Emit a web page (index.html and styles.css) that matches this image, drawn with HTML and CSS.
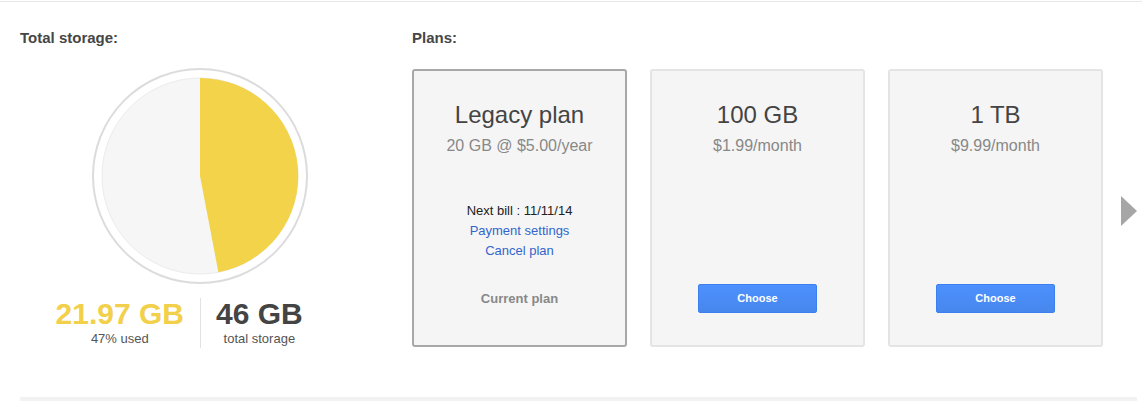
FILE: index.html
```html
<!DOCTYPE html>
<html lang="en">
<head>
<meta charset="utf-8">
<title>Storage</title>
<link rel="stylesheet" href="styles.css">
</head>
<body>
<div class="topline"></div>
<div class="content">
  <section class="storage">
    <h2 class="heading">Total storage:</h2>
    <div class="pie-wrap">
      <svg class="pie" width="218" height="218" viewBox="-109 -109 218 218">
        <circle cx="0" cy="0" r="107" fill="#fff" stroke="#dcdcdc" stroke-width="2"/>
        <circle cx="0" cy="0" r="98" fill="#f6f6f6" stroke="#ebebeb" stroke-width="1"/>
        <path d="M0,-98 A98,98 0 0,1 18.4,96.3 L0,0 Z" fill="#f2d349"/>
      </svg>
    </div>
    <div class="stats">
      <div class="half half-left">
        <div class="stat">
          <div class="stat-num used">21.97 GB</div>
          <div class="stat-label">47% used</div>
        </div>
      </div>
      <div class="half half-right">
        <div class="stat">
          <div class="stat-num total">46 GB</div>
          <div class="stat-label">total storage</div>
        </div>
      </div>
    </div>
  </section>
  <section class="plans">
    <h2 class="heading">Plans:</h2>
    <div class="plan-row">
      <div class="card current">
        <div class="card-title">Legacy plan</div>
        <div class="card-price">20 GB @ $5.00/year</div>
        <div class="details">
          <div class="bill">Next bill : 11/11/14</div>
          <a class="link" href="#">Payment settings</a>
          <a class="link" href="#">Cancel plan</a>
        </div>
        <div class="foot"><span class="current-label">Current plan</span></div>
      </div>
      <div class="card">
        <div class="card-title">100 GB</div>
        <div class="card-price">$1.99/month</div>
        <div class="foot"><button class="choose">Choose</button></div>
      </div>
      <div class="card">
        <div class="card-title">1 TB</div>
        <div class="card-price">$9.99/month</div>
        <div class="foot"><button class="choose">Choose</button></div>
      </div>
      <div class="next-arrow"></div>
    </div>
  </section>
</div>
<div class="bottom-strip"></div>
</body>
</html>
```
FILE: styles.css
```css
html, body {
  margin: 0;
  padding: 0;
  background: #fff;
  font-family: "Liberation Sans", Arial, sans-serif;
  overflow: hidden;
}

.topline {
  margin-top: 1px;
  height: 1px;
  background: #e8e8e8;
}

.content {
  display: flex;
  padding: 27px 5px 0 20px;
}

.heading {
  margin: 0;
  font-size: 15px;
  line-height: 18px;
  font-weight: bold;
  color: #464646;
}

.storage {
  width: 360px;
  margin-right: 32px;
  flex: none;
}

.pie-wrap {
  display: flex;
  justify-content: center;
  margin-top: 20px;
}

.pie {
  display: block;
}

.stats {
  display: flex;
  margin-top: 13px;
}

.half {
  width: 180px;
  display: flex;
}

.half-left {
  justify-content: flex-end;
  padding-right: 16px;
  box-sizing: border-box;
}

.half-right {
  justify-content: flex-start;
  padding-left: 15px;
  border-left: 1px solid #e2e2e2;
  box-sizing: border-box;
  padding-bottom: 1px;
}

.stat {
  text-align: center;
}

.stat-num {
  font-size: 30px;
  line-height: 32px;
  font-weight: bold;
}

.stat-num.used {
  color: #f2d04b;
}

.stat-num.total {
  color: #444;
}

.stat-label {
  margin-top: 1px;
  font-size: 13px;
  line-height: 16px;
  color: #555;
}

.plans {
  flex: 1;
}

.plan-row {
  display: flex;
  gap: 23px;
  margin-top: 22px;
}

.card {
  width: 215px;
  height: 278px;
  box-sizing: border-box;
  border: 2px solid #e4e4e4;
  border-radius: 3px;
  background: #f5f5f5;
  display: flex;
  flex-direction: column;
  align-items: center;
  padding: 30px 0 31px;
  text-align: center;
}

.card.current {
  border-color: #a8a8a8;
}

.card-title {
  font-size: 24px;
  line-height: 28px;
  color: #444;
}

.card-price {
  margin-top: 7px;
  font-size: 16px;
  line-height: 20px;
  color: #888;
}

.details {
  margin-top: 45px;
  display: flex;
  flex-direction: column;
  align-items: center;
  font-size: 13px;
  line-height: 20px;
}

.bill {
  color: #222;
}

.link {
  color: #3366cc;
  text-decoration: none;
}

.foot {
  margin-top: auto;
  height: 30px;
  display: flex;
  align-items: flex-start;
  justify-content: center;
}

.current-label {
  font-size: 13px;
  line-height: 30px;
  font-weight: bold;
  color: #888;
}

.choose {
  width: 119px;
  height: 29px;
  box-sizing: border-box;
  margin: 0;
  padding: 0 0 1px;
  border: 1px solid #3b80ee;
  border-radius: 2px;
  background: linear-gradient(#4d90fe, #4787ed);
  color: #fff;
  font-family: "Liberation Sans", Arial, sans-serif;
  font-size: 11px;
  font-weight: bold;
}

.next-arrow {
  align-self: center;
  margin-top: 6px;
  margin-left: -5px;
  width: 0;
  height: 0;
  border-left: 16px solid #a6a6a6;
  border-top: 15px solid transparent;
  border-bottom: 15px solid transparent;
}

.bottom-strip {
  margin: 49px 5px 0 20px;
  height: 10px;
  background: #f2f2f2;
}
```
